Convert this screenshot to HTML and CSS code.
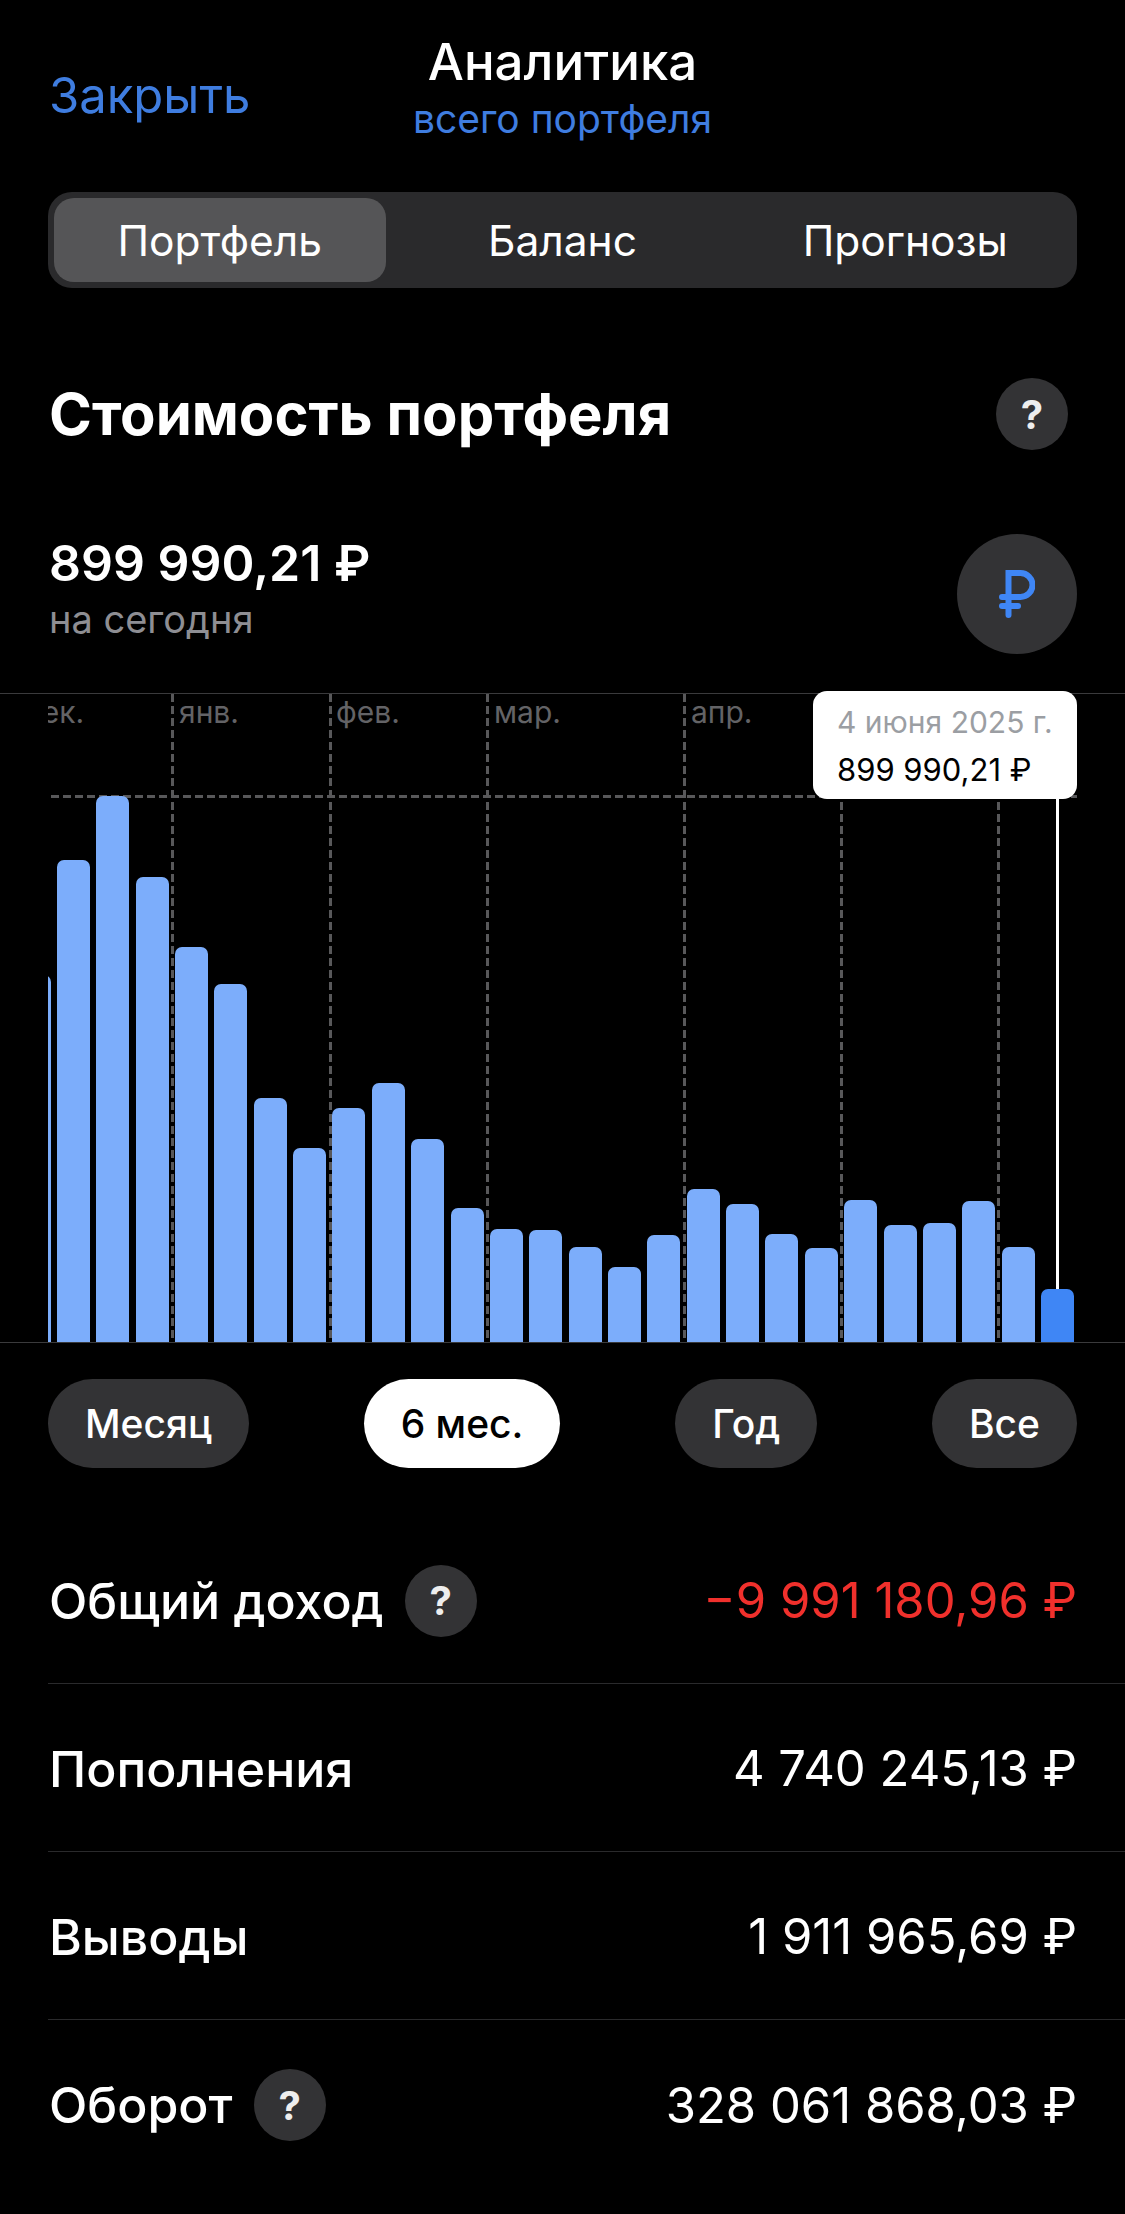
FILE: index.html
```html
<!DOCTYPE html>
<html lang="ru">
<head>
    <meta charset="UTF-8">
    <meta name="viewport" content="width=device-width, initial-scale=1.0">
    <title>Аналитика</title>
    <link rel="stylesheet" href="styles.css">
</head>
<body>
    <header class="navBar">
        <a class="closeLink">Закрыть</a>
        <div class="navTitle">
            <div class="navMain">Аналитика</div>
            <div class="navSub">всего портфеля</div>
        </div>
    </header>

    <div class="segments">
        <div class="segment active">Портфель</div>
        <div class="segment middle">Баланс</div>
        <div class="segment">Прогнозы</div>
    </div>

    <div class="titleRow">
        <h1>Стоимость портфеля</h1>
        <span class="helpDot">?</span>
    </div>

    <div class="amountRow">
        <div>
            <div class="amount">899 990,21 ₽</div>
            <div class="amountNote">на сегодня</div>
        </div>
        <div class="currencyDot">
            <svg width="36" height="48" viewBox="0 0 36 48" fill="none" stroke="#3f86f5" stroke-width="6" stroke-linecap="round">
                <path d="M9.500 45V3h12a11.500 11.500 0 0 1 0 24H3"/>
                <path d="M3 36h16"/>
            </svg>
        </div>
    </div>

    <!-- график -->
    <div class="chart">
        <div class="plot">
            <div class="monthLine" style="left: 123px"></div>
            <div class="monthLine" style="left: 281px"></div>
            <div class="monthLine" style="left: 438px"></div>
            <div class="monthLine" style="left: 635px"></div>
            <div class="monthLine" style="left: 792px"></div>
            <div class="monthLine" style="left: 949px"></div>
            <div class="maxLine"></div>
            <span class="monthLabel" style="left: -25px">дек.</span>
            <span class="monthLabel" style="left: 131px">янв.</span>
            <span class="monthLabel" style="left: 288px">фев.</span>
            <span class="monthLabel" style="left: 446px">мар.</span>
            <span class="monthLabel" style="left: 643px">апр.</span>
            <div class="bars">
                <div class="bar" style="height: 367px"></div>
                <div class="bar" style="height: 482px"></div>
                <div class="bar" style="height: 546px"></div>
                <div class="bar" style="height: 465px"></div>
                <div class="bar" style="height: 395px"></div>
                <div class="bar" style="height: 358px"></div>
                <div class="bar" style="height: 244px"></div>
                <div class="bar" style="height: 194px"></div>
                <div class="bar" style="height: 234px"></div>
                <div class="bar" style="height: 259px"></div>
                <div class="bar" style="height: 203px"></div>
                <div class="bar" style="height: 134px"></div>
                <div class="bar" style="height: 113px"></div>
                <div class="bar" style="height: 112px"></div>
                <div class="bar" style="height: 95px"></div>
                <div class="bar" style="height: 75px"></div>
                <div class="bar" style="height: 107px"></div>
                <div class="bar" style="height: 153px"></div>
                <div class="bar" style="height: 138px"></div>
                <div class="bar" style="height: 108px"></div>
                <div class="bar" style="height: 94px"></div>
                <div class="bar" style="height: 142px"></div>
                <div class="bar" style="height: 117px"></div>
                <div class="bar" style="height: 119px"></div>
                <div class="bar" style="height: 141px"></div>
                <div class="bar" style="height: 95px"></div>
                <div class="bar current" style="height: 53px"></div>
            </div>
            <div class="cursor"></div>
        </div>
        <div class="tooltip">
            <div class="tooltipDate">4 июня 2025 г.</div>
            <div class="tooltipValue">899 990,21 ₽</div>
        </div>
    </div>

    <div class="periods">
        <div class="period">Месяц</div>
        <div class="period active">6 мес.</div>
        <div class="period">Год</div>
        <div class="period">Все</div>
    </div>

    <div class="stats">
        <div class="statRow">
            <div class="statName">Общий доход <span class="helpDot">?</span></div>
            <div class="statValue negative">−9 991 180,96 ₽</div>
        </div>
        <div class="statRow">
            <div class="statName">Пополнения</div>
            <div class="statValue">4 740 245,13 ₽</div>
        </div>
        <div class="statRow">
            <div class="statName">Выводы</div>
            <div class="statValue">1 911 965,69 ₽</div>
        </div>
        <div class="statRow">
            <div class="statName">Оборот <span class="helpDot">?</span></div>
            <div class="statValue">328 061 868,03 ₽</div>
        </div>
    </div>
</body>
</html>
```
FILE: styles.css
```css
body {
    margin: 0;
    height: 2214px;
    overflow: hidden;
    background-color: #000;
    color: #fff;
    font-family: Inter, "Noto Sans", sans-serif;
}

.navBar {
    position: relative;
    height: 192px;
    padding-left: 49px;
    box-sizing: border-box;
}

.closeLink {
    display: block;
    padding-top: 65px;
    font-size: 49px;
    line-height: 62px;
    color: #3f7de0;
}

.navTitle {
    position: absolute;
    top: 34px;
    left: 0;
    right: 0;
    text-align: center;
}

.navMain {
    font-size: 51px;
    font-weight: 500;
    line-height: 56px;
}

.navSub {
    margin-top: 6px;
    font-size: 39px;
    line-height: 46px;
    color: #3f7de0;
}

.segments {
    display: flex;
    margin: 0 48px;
    padding: 6px;
    height: 96px;
    box-sizing: border-box;
    background-color: #2a2a2c;
    border-radius: 24px;
}

.segment {
    flex: 1;
    display: flex;
    align-items: center;
    justify-content: center;
    font-size: 42.500px;
    border-radius: 20px;
}

.segment.middle {
    flex: 0 0 354px;
}

.segment.active {
    background-color: #555557;
}

.titleRow {
    display: flex;
    align-items: center;
    justify-content: space-between;
    margin-top: 90px;
    padding: 0 57px 0 49px;
    height: 72px;
}

h1 {
    margin: 0;
    font-size: 58px;
    font-weight: 700;
}

.helpDot {
    display: flex;
    align-items: center;
    justify-content: center;
    width: 72px;
    height: 72px;
    border-radius: 50%;
    background-color: #333335;
    color: #eee;
    font-size: 40px;
    font-weight: 700;
}

.amountRow {
    display: flex;
    align-items: center;
    justify-content: space-between;
    margin-top: 84px;
    padding: 0 48px 0 49px;
    height: 120px;
}

.amount {
    margin-top: -12px;
    font-size: 50px;
    font-weight: 600;
    line-height: 58px;
}

.amountNote {
    margin-top: 4px;
    font-size: 38px;
    line-height: 46px;
    color: #8e8e93;
}

.currencyDot {
    display: flex;
    align-items: center;
    justify-content: center;
    width: 120px;
    height: 120px;
    border-radius: 50%;
    background-color: #333335;
}

.chart {
    position: relative;
    margin-top: 39px;
    height: 648px;
    border-top: 1px solid #3a3a3c;
    border-bottom: 1px solid #3a3a3c;
}

.plot {
    position: absolute;
    top: 0;
    bottom: 0;
    left: 48px;
    right: 48px;
    overflow: hidden;
}

.monthLine {
    position: absolute;
    top: 0;
    bottom: 0;
    width: 3px;
    background-image: repeating-linear-gradient(#58585a 0 8px, transparent 8px 12px);
}

.maxLine {
    position: absolute;
    top: 101px;
    left: 3px;
    right: 0;
    height: 3px;
    background-image: repeating-linear-gradient(90deg, #58585a 0 8px, transparent 8px 12px);
}

.monthLabel {
    position: absolute;
    top: 0;
    font-size: 30px;
    line-height: 36px;
    color: #636366;
}

.bars {
    position: absolute;
    bottom: 0;
    left: -30.4px;
    display: flex;
    align-items: flex-end;
    gap: 6.36px;
}

.bar {
    width: 33px;
    flex-shrink: 0;
    background-color: #7cadfb;
    border-radius: 7px 7px 0 0;
}

.bar.current {
    background-color: #3f86f5;
}

.cursor {
    position: absolute;
    top: 104px;
    bottom: 53px;
    left: 1008px;
    width: 3px;
    background-color: #fff;
}

.tooltip {
    position: absolute;
    top: -3px;
    right: 48px;
    width: 264px;
    height: 108px;
    padding: 13px 0 0 24px;
    box-sizing: border-box;
    background-color: #fff;
    border-radius: 14px;
}

.tooltipDate {
    font-size: 30px;
    line-height: 36px;
    color: #9b9ea3;
    white-space: nowrap;
}

.tooltipValue {
    margin-top: 12px;
    font-size: 31px;
    line-height: 36px;
    color: #000;
    white-space: nowrap;
}

.periods {
    display: flex;
    justify-content: space-between;
    margin: 36px 48px 0;
}

.period {
    display: flex;
    align-items: center;
    height: 89px;
    padding: 0 37px;
    border-radius: 45px;
    background-color: #333335;
    font-size: 39px;
    font-weight: 500;
}

.period.active {
    background-color: #fff;
    color: #000;
}

.stats {
    margin: 48px 0 0 48px;
}

.statRow {
    display: flex;
    align-items: center;
    justify-content: space-between;
    height: 168px;
    padding: 2px 48px 0 1px;
    box-sizing: border-box;
    border-bottom: 1px solid #2a2a2c;
}

.statRow:last-child {
    border-bottom: none;
}

.statName {
    display: flex;
    align-items: center;
    gap: 21px;
    font-size: 50px;
    font-weight: 500;
}

.statValue {
    font-size: 49px;
}

.statValue.negative {
    color: #f0302c;
}
```
